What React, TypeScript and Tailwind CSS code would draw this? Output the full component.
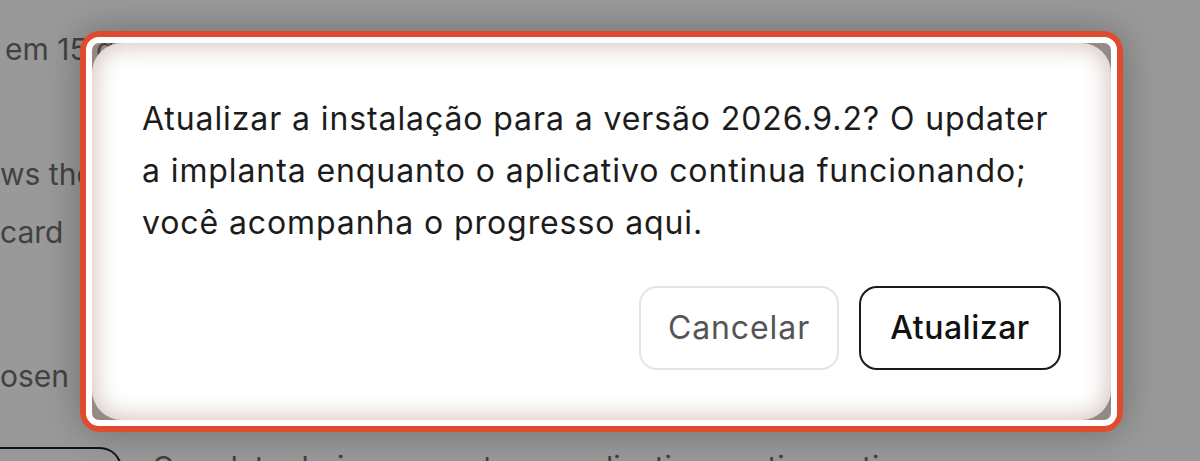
import React from 'react'

const font = { fontFamily: 'Inter, "Noto Sans", sans-serif' }

// Page behind the modal: only slivers of it show around the dialog.
function BackgroundPage() {
  return (
    <div className="flex flex-col text-[30px] leading-[36px] text-[#6e6e6e]">
      <p className="mt-[31px] pl-[5px] whitespace-nowrap">em 15 de set.</p>
      <p className="mt-[89px] whitespace-nowrap">ws the</p>
      <p className="mt-[22px] whitespace-nowrap">card</p>
      <p className="mt-[108px] whitespace-nowrap">osen</p>
      <div className="mt-[53px] flex items-start gap-[30px]">
        <div className="h-[60px] w-[122px] shrink-0 rounded-r-[22px] border-2 border-l-0 border-[#222]" />
        <p className="mt-[2px] whitespace-nowrap">O updater baixa o pacote e o aplicativo continua ativo</p>
      </div>
    </div>
  )
}

function UpdateDialog() {
  return (
    <div className="w-[1043px] rounded-[20px] border-[6px] border-[#e04a2e] shadow-[0_0_36px_rgba(0,0,0,0.28)]">
      <div className="rounded-[13px] border-[6px] border-white bg-[rgba(120,70,60,0.18)]">
        <div className="rounded-[30px] bg-white px-[50px] pt-[50px] pb-[50px] shadow-[inset_0_0_22px_4px_rgba(130,80,70,0.32)]">
          <p className="text-[32px] leading-[52px] tracking-[0.9px] text-[#1c1c1c]">
            Atualizar a instalação para a versão 2026.9.2? O updater
            <br />
            a implanta enquanto o aplicativo continua funcionando;
            <br />
            você acompanha o progresso aqui.
          </p>
          <div className="mt-[37px] flex justify-end gap-[20px]">
            <button className="h-[84px] w-[200px] rounded-[18px] border-2 border-[#e4e4e4] bg-white text-[32px] tracking-[0.9px] text-[#555]">
              Cancelar
            </button>
            <button className="h-[84px] w-[202px] rounded-[18px] border-2 border-[#1a1a1a] bg-white text-[32px] tracking-[0.5px] font-medium text-[#111]">
              Atualizar
            </button>
          </div>
        </div>
      </div>
    </div>
  )
}

export default function App() {
  return (
    <div className="relative h-[461px] w-full overflow-hidden bg-white" style={font}>
      <BackgroundPage />
      <div className="absolute inset-0 bg-black/40 pt-[31px] pl-[80px]">
        <UpdateDialog />
      </div>
    </div>
  )
}
